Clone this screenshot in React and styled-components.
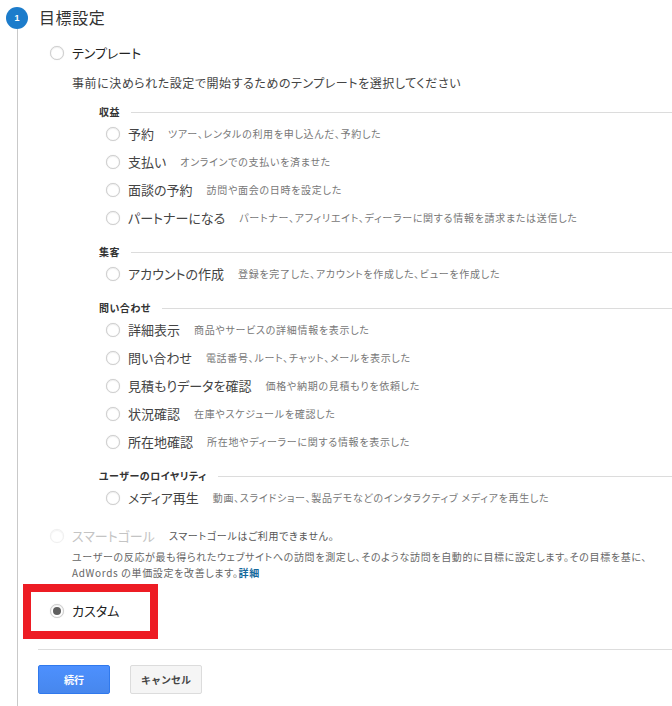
import React from "react";
import styled, { createGlobalStyle } from "styled-components";

const GlobalStyle = createGlobalStyle`
  html, body {
    margin: 0;
    padding: 0;
    background: #fff;
    overflow: hidden;
  }
  body {
    font-family: "Noto Sans CJK JP", "Liberation Sans", sans-serif;
    font-feature-settings: "palt";
    color: #444;
  }
`;

const Page = styled.div`
  display: flex;
  height: 706px;
  width: 672px;
  overflow: hidden;
`;
const Rail = styled.div`
  display: flex;
  flex-direction: column;
  align-items: center;
  width: 22px;
  margin: 7px 11px 0 6px;
`;
const Badge = styled.div`
  display: flex;
  align-items: center;
  justify-content: center;
  flex: none;
  width: 22px;
  height: 22px;
  border-radius: 50%;
  background: #1c7ccb;
  color: #fff;
  font: bold 9px "Liberation Sans", sans-serif;
`;
const RailLine = styled.div`
  flex: 1;
  width: 1px;
  background: #c9c9c9;
`;
const Main = styled.div`
  flex: 1;
  min-width: 0;
`;
const Title = styled.h2`
  margin: 0;
  height: 36px;
  font-size: 16px;
  font-weight: 400;
  line-height: 35px;
  letter-spacing: 0.6px;
  color: #333;
`;
const Options = styled.div`
  padding-left: 11px;
`;
const OptionRow = styled.label`
  display: flex;
  align-items: center;
  gap: 8px;
  height: 28px;
  white-space: nowrap;
  position: relative;
`;
const TopRow = styled(OptionRow)`
  margin-top: 2px;
`;
const Radio = styled.span`
  display: flex;
  align-items: center;
  justify-content: center;
  flex: none;
  box-sizing: border-box;
  width: 14px;
  height: 14px;
  margin-top: 2px;
  border-radius: 50%;
  border: 1px solid ${(p) => (p.$disabled ? "#f0f0f0" : "#cfcfcf")};
  background: #fff;
  box-shadow: 0 0 1px ${(p) => (p.$disabled ? "#f4f4f4" : "#d8d8d8")},
    inset 0 1px 1px rgba(0, 0, 0, 0.05);
  &::after {
    content: "";
    display: ${(p) => (p.$checked ? "block" : "none")};
    width: 8px;
    height: 8px;
    border-radius: 50%;
    background: #5f5f5f;
  }
`;
const OptionName = styled.span`
  font-size: 13px;
  color: ${(p) => (p.$disabled ? "#c4c4c4" : p.$strong ? "#222" : "#444")};
`;
const OptionNote = styled.span`
  margin-left: 6px;
  font-size: 10px;
  letter-spacing: 0.7px;
  color: ${(p) => (p.$dark ? "#555" : "#777")};
`;
const Lead = styled.p`
  margin: 0;
  padding-left: 22px;
  height: 31px;
  font-size: 12px;
  letter-spacing: 0.55px;
  line-height: 33px;
  white-space: nowrap;
  color: #444;
`;
const Groups = styled.div`
  padding-left: 49px;
  margin-top: 6px;
`;
const GroupHead = styled.div`
  display: flex;
  align-items: center;
  gap: 11px;
  height: 16px;
  font-size: 10px;
  font-weight: 700;
  letter-spacing: 0.5px;
  color: #333;
  white-space: nowrap;
  &::after {
    content: "";
    flex: 1;
    height: 1px;
    margin-top: 2px;
    background: #dcdcdc;
  }
`;
const Group = styled.section`
  margin-bottom: ${(p) => p.$gap}px;
`;
const GroupRows = styled.div`
  padding-left: 7px;
`;
const Smart = styled.div`
  margin-top: 10px;
`;
const SmartText = styled.p`
  margin: 0;
  padding-left: 22px;
  font-size: 10px;
  line-height: 16px;
  white-space: nowrap;
  color: #666;
  letter-spacing: 0.65px;
`;
const DetailLink = styled.a`
  color: #15699c;
  font-weight: 700;
`;
const CustomRow = styled(OptionRow)`
  margin-top: 15px;
`;
const Highlight = styled.div`
  position: absolute;
  left: -27px;
  top: -12px;
  width: 135px;
  height: 55px;
  box-sizing: border-box;
  border: 8px solid #ed1c24;
  pointer-events: none;
`;
const Footer = styled.div`
  display: flex;
  gap: 20px;
  margin-top: 25px;
  padding-top: 15px;
  border-top: 1px solid #dddddd;
  margin-left: -1px;
`;
const PrimaryButton = styled.button`
  width: 72px;
  height: 29px;
  padding: 0;
  font: 700 10px "Noto Sans CJK JP", sans-serif;
  color: #fff;
  background: linear-gradient(#4d90fe, #4787ed);
  border: 1px solid #3079ed;
  border-radius: 2px;
`;
const PlainButton = styled(PrimaryButton)`
  color: #444;
  background: #f5f5f5;
  border-color: #dcdcdc;
`;

const groups = [
  {
    name: "収益",
    gap: 12,
    items: [
      ["予約", "ツアー、レンタルの利用を申し込んだ、予約した"],
      ["支払い", "オンラインでの支払いを済ませた"],
      ["面談の予約", "訪問や面会の日時を設定した"],
      ["パートナーになる", "パートナー、アフィリエイト、ディーラーに関する情報を請求または送信した"],
    ],
  },
  {
    name: "集客",
    gap: 12,
    items: [["アカウントの作成", "登録を完了した、アカウントを作成した、ビューを作成した"]],
  },
  {
    name: "問い合わせ",
    gap: 12,
    items: [
      ["詳細表示", "商品やサービスの詳細情報を表示した"],
      ["問い合わせ", "電話番号、ルート、チャット、メールを表示した"],
      ["見積もりデータを確認", "価格や納期の見積もりを依頼した"],
      ["状況確認", "在庫やスケジュールを確認した"],
      ["所在地確認", "所在地やディーラーに関する情報を表示した"],
    ],
  },
  {
    name: "ユーザーのロイヤリティ",
    gap: 0,
    items: [["メディア再生", "動画、スライドショー、製品デモなどのインタラクティブ メディアを再生した"]],
  },
];

export default function App() {
  return (
    <>
      <GlobalStyle />
      <Page>
        <Rail>
          <Badge>1</Badge>
          <RailLine />
        </Rail>
        <Main>
          <Title>目標設定</Title>
          <Options>
            <TopRow>
              <Radio />
              <OptionName $strong>テンプレート</OptionName>
            </TopRow>
            <Lead>事前に決められた設定で開始するためのテンプレートを選択してください</Lead>
            <Groups>
              {groups.map((group) => (
                <Group key={group.name} $gap={group.gap}>
                  <GroupHead>{group.name}</GroupHead>
                  <GroupRows>
                    {group.items.map(([name, note]) => (
                      <OptionRow key={name}>
                        <Radio />
                        <OptionName>{name}</OptionName>
                        <OptionNote>{note}</OptionNote>
                      </OptionRow>
                    ))}
                  </GroupRows>
                </Group>
              ))}
            </Groups>
            <Smart>
              <OptionRow>
                <Radio $disabled />
                <OptionName $disabled>スマートゴール</OptionName>
                <OptionNote $dark>スマートゴールはご利用できません。</OptionNote>
              </OptionRow>
              <SmartText>
                ユーザーの反応が最も得られたウェブサイトへの訪問を測定し、そのような訪問を自動的に目標に設定します。その目標を基に、
                <br />
                AdWords の単価設定を改善します。<DetailLink>詳細</DetailLink>
              </SmartText>
            </Smart>
            <CustomRow>
              <Radio $checked />
              <OptionName $strong>カスタム</OptionName>
              <Highlight />
            </CustomRow>
          </Options>
          <Footer>
            <PrimaryButton>続行</PrimaryButton>
            <PlainButton>キャンセル</PlainButton>
          </Footer>
        </Main>
      </Page>
    </>
  );
}
